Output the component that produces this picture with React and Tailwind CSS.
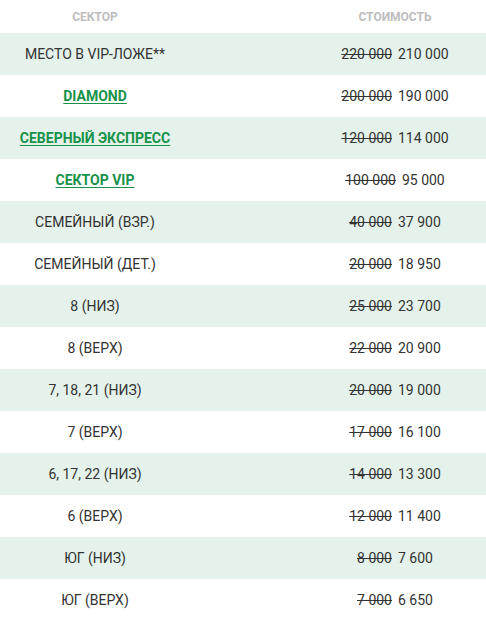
const rows = [
  { name: 'МЕСТО В VIP-ЛОЖЕ**', old: '220 000', price: '210 000' },
  { name: 'DIAMOND', old: '200 000', price: '190 000', link: true },
  { name: 'СЕВЕРНЫЙ ЭКСПРЕСС', old: '120 000', price: '114 000', link: true },
  { name: 'СЕКТОР VIP', old: '100 000', price: '95 000', link: true },
  { name: 'СЕМЕЙНЫЙ (ВЗР.)', old: '40 000', price: '37 900' },
  { name: 'СЕМЕЙНЫЙ (ДЕТ.)', old: '20 000', price: '18 950' },
  { name: '8 (НИЗ)', old: '25 000', price: '23 700' },
  { name: '8 (ВЕРХ)', old: '22 000', price: '20 900' },
  { name: '7, 18, 21 (НИЗ)', old: '20 000', price: '19 000' },
  { name: '7 (ВЕРХ)', old: '17 000', price: '16 100' },
  { name: '6, 17, 22 (НИЗ)', old: '14 000', price: '13 300' },
  { name: '6 (ВЕРХ)', old: '12 000', price: '11 400' },
  { name: 'ЮГ (НИЗ)', old: '8 000', price: '7 600' },
  { name: 'ЮГ (ВЕРХ)', old: '7 000', price: '6 650' },
];

export default function App() {
  return (
    <div className="w-[486px] bg-white font-['Roboto',sans-serif] text-[14px] text-[#333]">
      <div className="grid h-[33px] grid-cols-[190px_1fr_182px] items-center text-[12px] font-bold text-[#bdbdbd]">
        <div className="text-center">СЕКТОР</div>
        <div />
        <div className="text-center">СТОИМОСТЬ</div>
      </div>
      {rows.map((r, i) => (
        <div
          key={r.name}
          className={`grid h-[42px] grid-cols-[190px_1fr_182px] items-center ${i % 2 === 0 ? 'bg-[#e4f2eb]' : 'bg-white'}`}
        >
          <div className="text-center">
            {r.link ? (
              <a href="#" className="font-bold text-[#17924a] underline underline-offset-2">
                {r.name}
              </a>
            ) : (
              r.name
            )}
          </div>
          <div />
          <div className="text-center">
            <span className="line-through">{r.old}</span>
            <span className="ml-[6px]">{r.price}</span>
          </div>
        </div>
      ))}
    </div>
  );
}
